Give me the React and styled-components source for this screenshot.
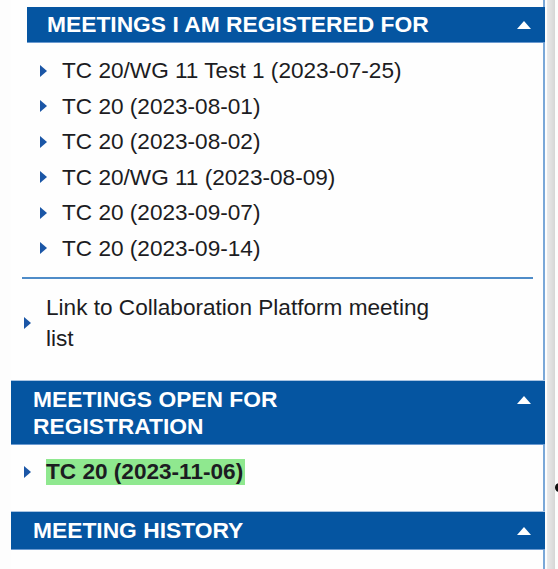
import React from 'react';
import styled, { createGlobalStyle } from 'styled-components';

const GlobalStyle = createGlobalStyle`
  html, body {
    margin: 0;
    padding: 0;
    background: #fdfdfd;
  }
  body {
    font-family: "Liberation Sans", Arial, sans-serif;
    color: #1c1c22;
  }
`;

const Page = styled.div`
  display: flex;
  width: 558px;
  height: 569px;
  overflow: hidden;
  padding-left: 11px;
  box-sizing: border-box;
`;

// Sidebar column with a thin light-blue edge on the right
const Column = styled.div`
  width: 534px;
  display: flex;
  flex-direction: column;
  padding-top: 7px;
  box-shadow: inset -2px 0 #7aa8d8;
  background: #fefefe;
`;

const Gutter = styled.div`
  width: 8px;
  margin-left: 2px;
  background: linear-gradient(to right, #eaeaea, #d6d6d6);
`;

const Edge = styled.div`
  width: 3px;
  overflow: hidden;
`;

const Dot = styled.div`
  width: 8px;
  height: 9px;
  margin-top: 483px;
  border-radius: 50%;
  background: #111;
`;

const Section = styled.div`
  margin-left: ${(p) => p.$indent || 0}px;
`;

const Header = styled.div`
  display: flex;
  align-items: ${(p) => (p.$multi ? 'flex-start' : 'center')};
  justify-content: space-between;
  background: #0555a1;
  color: #fff;
  font-weight: bold;
  font-size: 22.8px;
  line-height: 27px;
  padding: ${(p) => p.$pad || '4px 14px 4px 20px'};
  border-bottom: 1px solid #6b9ad0;
  border-top: ${(p) => (p.$edged ? '1px solid #a9c4e2' : 'none')};
  margin-top: ${(p) => p.$gap || 0}px;
`;

const Title = styled.span`
  max-width: ${(p) => (p.$wrap ? '300px' : 'none')};
`;

const Caret = styled.span`
  width: 0;
  height: 0;
  margin-top: ${(p) => (p.$multi ? '10px' : '0')};
  border-left: 7px solid transparent;
  border-right: 7px solid transparent;
  border-bottom: 8px solid #fff;
`;

const List = styled.ul`
  list-style: none;
  margin: 0;
  padding: 10px 0 0 13px;
`;

const Item = styled.li`
  display: flex;
  align-items: center;
  font-size: 22.6px;
  line-height: 35.5px;
  font-weight: ${(p) => (p.$bold ? 'bold' : 'normal')};
`;

const Bullet = styled.span`
  flex: none;
  width: 0;
  height: 0;
  border-top: 6px solid transparent;
  border-bottom: 6px solid transparent;
  border-left: 7px solid #1b56a6;
  margin-right: 15px;
`;

const Mark = styled.span`
  background: ${(p) => (p.$hot ? '#8fe88f' : 'transparent')};
  line-height: 26px;
  padding-right: 2px;
`;

const Divider = styled.hr`
  border: none;
  height: 2px;
  background: #4f8cc8;
  margin: 11px 12px 0 11px;
`;

const Block = styled.div`
  display: flex;
  align-items: center;
  padding: ${(p) => p.$pad};
`;

const LinkText = styled.span`
  font-size: 22.6px;
  line-height: 31px;
  max-width: 405px;
`;

const registered = [
  'TC 20/WG 11 Test 1 (2023-07-25)',
  'TC 20 (2023-08-01)',
  'TC 20 (2023-08-02)',
  'TC 20/WG 11 (2023-08-09)',
  'TC 20 (2023-09-07)',
  'TC 20 (2023-09-14)',
];

export default function App() {
  return (
    <>
      <GlobalStyle />
      <Page>
        <Column>
          <Section $indent={16}>
            <Header>
              <Title>MEETINGS I AM REGISTERED FOR</Title>
              <Caret />
            </Header>
            <List>
              {registered.map((m) => (
                <Item key={m}>
                  <Bullet />
                  {m}
                </Item>
              ))}
            </List>
          </Section>
          <Divider />
          <Block $pad="13px 0 0 13px">
            <Bullet />
            <LinkText>Link to Collaboration Platform meeting list</LinkText>
          </Block>
          <Header $multi $edged $gap={26} $pad="5px 14px 4px 22px">
            <Title $wrap>MEETINGS OPEN FOR REGISTRATION</Title>
            <Caret $multi />
          </Header>
          <Block $pad="14px 0 0 13px">
            <Item $bold>
              <Bullet />
              <Mark $hot>TC 20 (2023-11-06)</Mark>
            </Item>
          </Block>
          <Header $edged $gap={26} $pad="5px 14px 5px 22px">
            <Title>MEETING HISTORY</Title>
            <Caret />
          </Header>
        </Column>
        <Gutter />
        <Edge>
          <Dot />
        </Edge>
      </Page>
    </>
  );
}
